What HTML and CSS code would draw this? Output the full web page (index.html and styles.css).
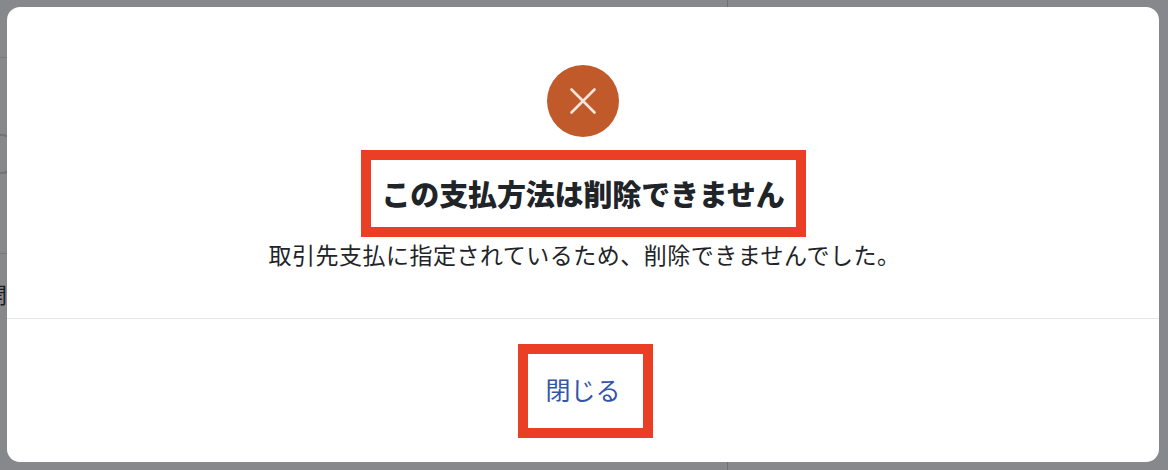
FILE: index.html
```html
<!DOCTYPE html>
<html lang="ja">
<head>
<meta charset="utf-8">
<title>この支払方法は削除できません</title>
<link rel="stylesheet" href="styles.css">
</head>
<body>
<div class="backdrop" aria-hidden="true">
  <span class="bg-line bg-line-a"></span>
  <span class="bg-arc"></span>
  <span class="bg-line bg-line-d"></span>
  <span class="bg-vline"></span>
  <span class="bg-text">開</span>
</div>
<div class="overlay">
  <section class="modal">
    <div class="modal-body">
      <div class="status-icon">
        <svg width="30" height="30" viewBox="0 0 30 30" fill="none" stroke="#f8e6dc" stroke-width="2.6" stroke-linecap="round">
          <path d="M3.500 3.500 L26.500 26.500 M26.500 3.500 L3.500 26.500"/>
        </svg>
      </div>
      <h1 class="title">この支払方法は削除できません</h1>
      <p class="message">取引先支払に指定されているため、削除できませんでした。</p>
    </div>
    <div class="modal-footer">
      <button class="close-btn" type="button">閉じる</button>
    </div>
  </section>
</div>
</body>
</html>
```
FILE: styles.css
```css
* { box-sizing: border-box; }
html, body { margin: 0; padding: 0; height: 100%; }
body {
  width: 1168px;
  height: 470px;
  overflow: hidden;
  position: relative;
  background: #87888b;
  font-family: "Noto Sans CJK JP", "Noto Sans", sans-serif;
}
.backdrop { position: absolute; inset: 0; overflow: hidden; }
.bg-line { position: absolute; left: 0; width: 8px; height: 1px; background: #76787b; }
.bg-line-a { top: 57px; }
.bg-line-d { top: 253px; }
.bg-arc {
  position: absolute;
  left: -60px;
  top: 134px;
  width: 74px;
  height: 40px;
  border: 2px solid #717377;
  border-radius: 12px;
}
.bg-vline { position: absolute; left: 727px; top: 0; width: 1px; height: 470px; background: #6f7074; }
.bg-text { position: absolute; left: -15px; top: 280px; font-size: 22px; line-height: 26px; color: #1c1d20; }
.overlay {
  position: absolute;
  inset: 0;
  padding: 7px 9px 8px 7px;
  display: flex;
}
.modal {
  flex: 1;
  display: flex;
  flex-direction: column;
  background: #fff;
  border-radius: 13px;
}
.modal-body {
  height: 312px;
  padding-top: 58px;
  display: flex;
  flex-direction: column;
  align-items: center;
  border-bottom: 1px solid #e4e6ea;
}
.status-icon {
  width: 72px;
  height: 72px;
  border-radius: 50%;
  background: #c15a2b;
  display: flex;
  align-items: center;
  justify-content: center;
  flex: none;
}
.title {
  margin: 13px 0 0;
  width: 445px;
  height: 87px;
  border: 10px solid #ea3f24;
  display: flex;
  align-items: center;
  justify-content: center;
  padding-bottom: 2px;
  font-size: 29px;
  font-weight: 900;
  line-height: 40px;
  letter-spacing: -0.15px;
  color: #1f2429;
  white-space: nowrap;
}
.message {
  margin: 0;
  padding-left: 3px;
  font-size: 23px;
  line-height: 34px;
  letter-spacing: 0.5px;
  color: #1f2429;
  white-space: nowrap;
}
.modal-footer {
  flex: 1;
  display: flex;
  justify-content: center;
  padding-top: 25px;
}
.close-btn {
  width: 135px;
  height: 94px;
  margin-left: 5px;
  padding: 0 5px 4px 0;
  background: #fff;
  border: 10px solid #ea3f24;
  border-radius: 0;
  font-family: inherit;
  font-size: 25px;
  line-height: 34px;
  color: #3356a8;
}
```
